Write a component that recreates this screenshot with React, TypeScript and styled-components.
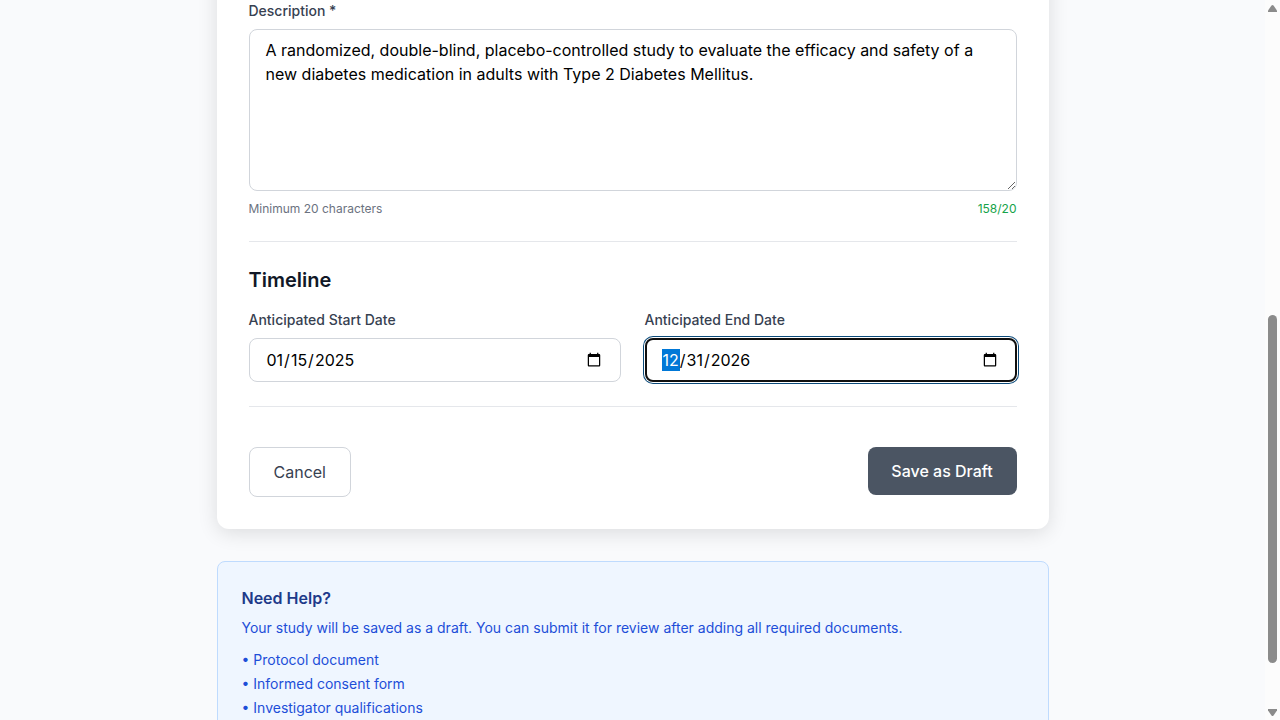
import React from 'react';
import styled, { createGlobalStyle } from 'styled-components';

const GlobalStyle = createGlobalStyle`
  *, *::before, *::after { box-sizing: border-box; }
  body { margin: 0; background: #f9fafb; font-family: Inter, "Liberation Sans", sans-serif; }
  h2, h3, p, ul { margin: 0; padding: 0; }
`;

const Screen = styled.div`
  display: flex;
  height: 720px;
  overflow: hidden;
  background: #f9fafc;
`;

const Page = styled.main`
  flex: 1;
  min-width: 0;
  height: 720px;
  overflow: hidden;
`;

const Column = styled.div`
  width: 832px;
  margin: -60px auto 0;
`;

const Card = styled.form`
  padding: 61px 32px 32px;
  background: #fff;
  border-radius: 12px;
  box-shadow: 0 4px 20px rgba(0, 0, 0, 0.12);
`;

const Label = styled.label`
  display: block;
  margin-bottom: 8px;
  font-size: 14px;
  line-height: 20px;
  font-weight: 500;
  color: #374151;
`;

const TextArea = styled.textarea`
  display: block;
  width: 100%;
  height: 162px;
  padding: 8px 16px;
  border: 1px solid #d1d5db;
  border-radius: 8px;
  font: 400 16px/24px Inter, "Liberation Sans", sans-serif;
  color: #000;
  background: #fff;
  resize: vertical;
`;

const Hints = styled.div`
  display: flex;
  justify-content: space-between;
  margin-top: 10px;
  font-size: 12px;
  line-height: 16px;
  color: #6b7280;
`;

const Counter = styled.span`
  color: #16a34a;
`;

const Section = styled.section`
  margin-top: 24px;
  padding-top: 24px;
  border-top: 1px solid #e5e7eb;
`;

const SectionTitle = styled.h2`
  margin-bottom: 16px;
  font-size: 20px;
  line-height: 28px;
  font-weight: 600;
  color: #111827;
`;

const Fields = styled.div`
  display: grid;
  grid-template-columns: 1fr 1fr;
  gap: 24px;
`;

const DateInput = styled.input<{ $active?: boolean }>`
  display: block;
  width: 100%;
  height: 44px;
  padding: ${p => (p.$active ? '6px 15px' : '7px 16px')};
  border: ${p => (p.$active ? '2px solid #101010' : '1px solid #d1d5db')};
  border-radius: 8px;
  box-shadow: ${p => (p.$active ? '0 0 0 1px #fff, 0 0 0 2px #0b4a7a' : 'none')};
  outline: none;
  font: 400 16px/24px Inter, "Liberation Sans", sans-serif;
  color: #000;
  background: #fff;

  &::-webkit-datetime-edit-month-field {
    background: ${p => (p.$active ? '#0078d7' : 'transparent')};
    color: ${p => (p.$active ? '#fff' : '#000')};
  }
`;

const Actions = styled.div`
  display: flex;
  justify-content: space-between;
  align-items: flex-start;
  margin-top: 24px;
  padding-top: 40px;
  border-top: 1px solid #e5e7eb;
`;

const Button = styled.button<{ $primary?: boolean }>`
  padding: ${p => (p.$primary ? '12px 23.75px' : '12px 24px')};
  border: ${p => (p.$primary ? '0' : '1px solid #d1d5db')};
  border-radius: 8px;
  font: ${p => (p.$primary ? 500 : 400)} 16px/24px Inter, "Liberation Sans", sans-serif;
  color: ${p => (p.$primary ? '#fff' : '#374151')};
  background: ${p => (p.$primary ? '#4b5563' : '#fff')};
`;

const Help = styled.aside`
  margin-top: 32px;
  padding: 24px;
  border: 1px solid #bfdbfe;
  border-radius: 8px;
  background: #eff6ff;
  font-size: 14px;
  line-height: 20px;
  color: #1d4ed8;
`;

const HelpTitle = styled.h3`
  margin-bottom: 8px;
  font-size: 16px;
  line-height: 24px;
  font-weight: 600;
  color: #1e3a8a;
`;

const HelpList = styled.ul`
  display: grid;
  gap: 4px;
  margin-top: 12px;
  list-style: none;
`;

const Scrollbar = styled.div`
  display: flex;
  flex-direction: column;
  align-items: center;
  width: 15px;
  height: 720px;
  padding: 5px 0 4px;
  background: #fcfcfc;
`;

const Thumb = styled.div`
  width: 9px;
  height: 348px;
  margin: 303px 0 auto;
  border-radius: 5px;
  background: #8b8b8b;
`;

const Arrow = ({ down }: { down?: boolean }) => (
  <svg width="9" height="7" viewBox="0 0 9 7" fill="#8b8b8b">
    <path d={down ? 'M0 0H9V1.5L5.5 6.5Q4.5 7.5 3.5 6.5L0 1.5Z' : 'M0 7H9V5.5L5.5 0.5Q4.5 -0.5 3.5 0.5L0 5.5Z'} />
  </svg>
);

const documents = ['Protocol document', 'Informed consent form', 'Investigator qualifications'];

export default function App() {
  return (
    <Screen>
      <GlobalStyle />
      <Page>
        <Column>
          <Card>
            <Label htmlFor="description">Description *</Label>
            <TextArea
              id="description"
              spellCheck={false}
              defaultValue="A randomized, double-blind, placebo-controlled study to evaluate the efficacy and safety of a new diabetes medication in adults with Type 2 Diabetes Mellitus."
            />
            <Hints>
              <span>Minimum 20 characters</span>
              <Counter>158/20</Counter>
            </Hints>
            <Section>
              <SectionTitle>Timeline</SectionTitle>
              <Fields>
                <div>
                  <Label htmlFor="start">Anticipated Start Date</Label>
                  <DateInput id="start" type="date" defaultValue="2025-01-15" />
                </div>
                <div>
                  <Label htmlFor="end">Anticipated End Date</Label>
                  <DateInput id="end" type="date" defaultValue="2026-12-31" $active />
                </div>
              </Fields>
            </Section>
            <Actions>
              <Button type="button">Cancel</Button>
              <Button type="button" $primary>Save as Draft</Button>
            </Actions>
          </Card>
          <Help>
            <HelpTitle>Need Help?</HelpTitle>
            <p>Your study will be saved as a draft. You can submit it for review after adding all required documents.</p>
            <HelpList>
              {documents.map(name => (
                <li key={name}>• {name}</li>
              ))}
            </HelpList>
          </Help>
        </Column>
      </Page>
      <Scrollbar>
        <Arrow />
        <Thumb />
        <Arrow down />
      </Scrollbar>
    </Screen>
  );
}
